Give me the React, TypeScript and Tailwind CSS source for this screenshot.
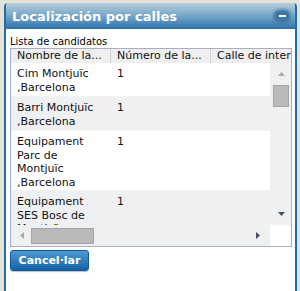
import React from 'react';

const rows = [
  { name: ['Cim Montjuïc', ',Barcelona'], num: '1', h: 'h-[34px]', bg: 'bg-white' },
  { name: ['Barri Montjuïc', ',Barcelona'], num: '1', h: 'h-[34px]', bg: 'bg-[#eff0f1]' },
  { name: ['Equipament', 'Parc de', 'Montjuïc', ',Barcelona'], num: '1', h: 'h-[60px]', bg: 'bg-white' },
  { name: ['Equipament', 'SES Bosc de', 'Montjuïc'], num: '1', h: 'h-[60px]', bg: 'bg-[#eff0f1]' },
];

const UpArrow = ({ color }: { color: string }) => (
  <svg width="7" height="4" viewBox="0 0 7 4">
    <path d="M3.5 0 L7 4 L0 4 Z" fill={color} />
  </svg>
);

const DownArrow = ({ color }: { color: string }) => (
  <svg width="7" height="4" viewBox="0 0 7 4">
    <path d="M0 0 L7 0 L3.5 4 Z" fill={color} />
  </svg>
);

const LeftArrow = ({ color }: { color: string }) => (
  <svg width="4" height="7" viewBox="0 0 4 7">
    <path d="M4 0 L4 7 L0 3.5 Z" fill={color} />
  </svg>
);

const RightArrow = ({ color }: { color: string }) => (
  <svg width="4" height="7" viewBox="0 0 4 7">
    <path d="M0 0 L4 3.5 L0 7 Z" fill={color} />
  </svg>
);

export default function App() {
  return (
    <div className="w-[300px] h-[291px] bg-[#e5e3d5] pt-[3px] pl-[4px] overflow-hidden font-['DejaVu_Sans',sans-serif]">
      <div className="w-[293px] h-[300px] bg-white border-x-2 border-[#1f6dab] rounded-t-[4px] overflow-hidden">
        {/* title bar */}
        <div className="h-[26px] flex items-center justify-between pl-[6px] pr-[6px] bg-gradient-to-b from-[#b6cfdb] via-[#74a5c7] to-[#2a72ad]">
          <span className="text-white font-bold text-[13px] leading-none">Localización por calles</span>
          <div className="w-[14px] h-[10px] rounded-full bg-[#3f75a0] shadow-[0_0_3px_2px_rgba(50,100,145,0.6)] flex items-center justify-center">
            <div className="w-[7px] h-[2px] bg-white" />
          </div>
        </div>

        {/* body */}
        <div className="pl-[4px] pt-[7px]">
          <div className="text-[10px] leading-[12px] text-black">Lista de candidatos</div>
          <div className="w-[282px] h-[199px] border border-[#a9aec6] flex flex-col text-[11px] text-[#111]">
            {/* header */}
            <div className="h-[14px] flex bg-[#efefef] leading-[14px] whitespace-nowrap overflow-hidden">
              <div className="w-[100px] shrink-0 pl-[6px] border-r border-[#cfcfcf]">Nombre de la...</div>
              <div className="w-[100px] shrink-0 pl-[6px] border-r border-[#cfcfcf]">Número de la...</div>
              <div className="flex-1 pl-[6px] overflow-hidden">Calle de intersección</div>
            </div>

            {/* rows + vertical scrollbar */}
            <div className="h-[162px] flex">
              <div className="flex-1 overflow-hidden">
                {rows.map((r, i) => (
                  <div key={i} className={`flex ${r.h} ${r.bg} pt-[4px] leading-[13.5px] border-b border-[#f3f3f3]`}>
                    <div className="w-[100px] shrink-0 pl-[6px]">
                      {r.name.map((l, j) => (
                        <div key={j}>{l}</div>
                      ))}
                    </div>
                    <div className="w-[100px] shrink-0 pl-[6px]">{r.num}</div>
                  </div>
                ))}
              </div>
              <div className="w-[21px] bg-[#eff0f1] flex flex-col items-center">
                <div className="h-[22px] flex items-center justify-center pl-[1px]">
                  <UpArrow color="#a8a8a8" />
                </div>
                <div className="w-[16px] h-[22px] bg-[#b9b9b9] border border-[#a6a6a6]" />
                <div className="flex-1" />
                <div className="h-[22px] flex items-center justify-center pl-[1px]">
                  <DownArrow color="#4b4b6e" />
                </div>
              </div>
            </div>

            {/* horizontal scrollbar */}
            <div className="h-[21px] flex">
              <div className="flex-1 bg-[#eff0f1] flex items-center">
                <div className="w-[20px] flex justify-center pl-[2px]">
                  <LeftArrow color="#a8a8a8" />
                </div>
                <div className="w-[63px] h-[16px] bg-[#b9b9b9] border border-[#a6a6a6]" />
                <div className="flex-1" />
                <div className="w-[14px] flex justify-start">
                  <RightArrow color="#4b4b6e" />
                </div>
              </div>
              <div className="w-[21px] bg-white" />
            </div>
          </div>

          {/* button */}
          <button className="mt-[1px] w-[79px] h-[21px] rounded-[3px] border border-[#0d5b9c] bg-gradient-to-b from-[#4f98cf] to-[#1262a6] text-white font-bold text-[11px] leading-none shadow-[0_1px_1px_rgba(0,0,0,0.25)]">
            Cancel·lar
          </button>
        </div>
      </div>
    </div>
  );
}
